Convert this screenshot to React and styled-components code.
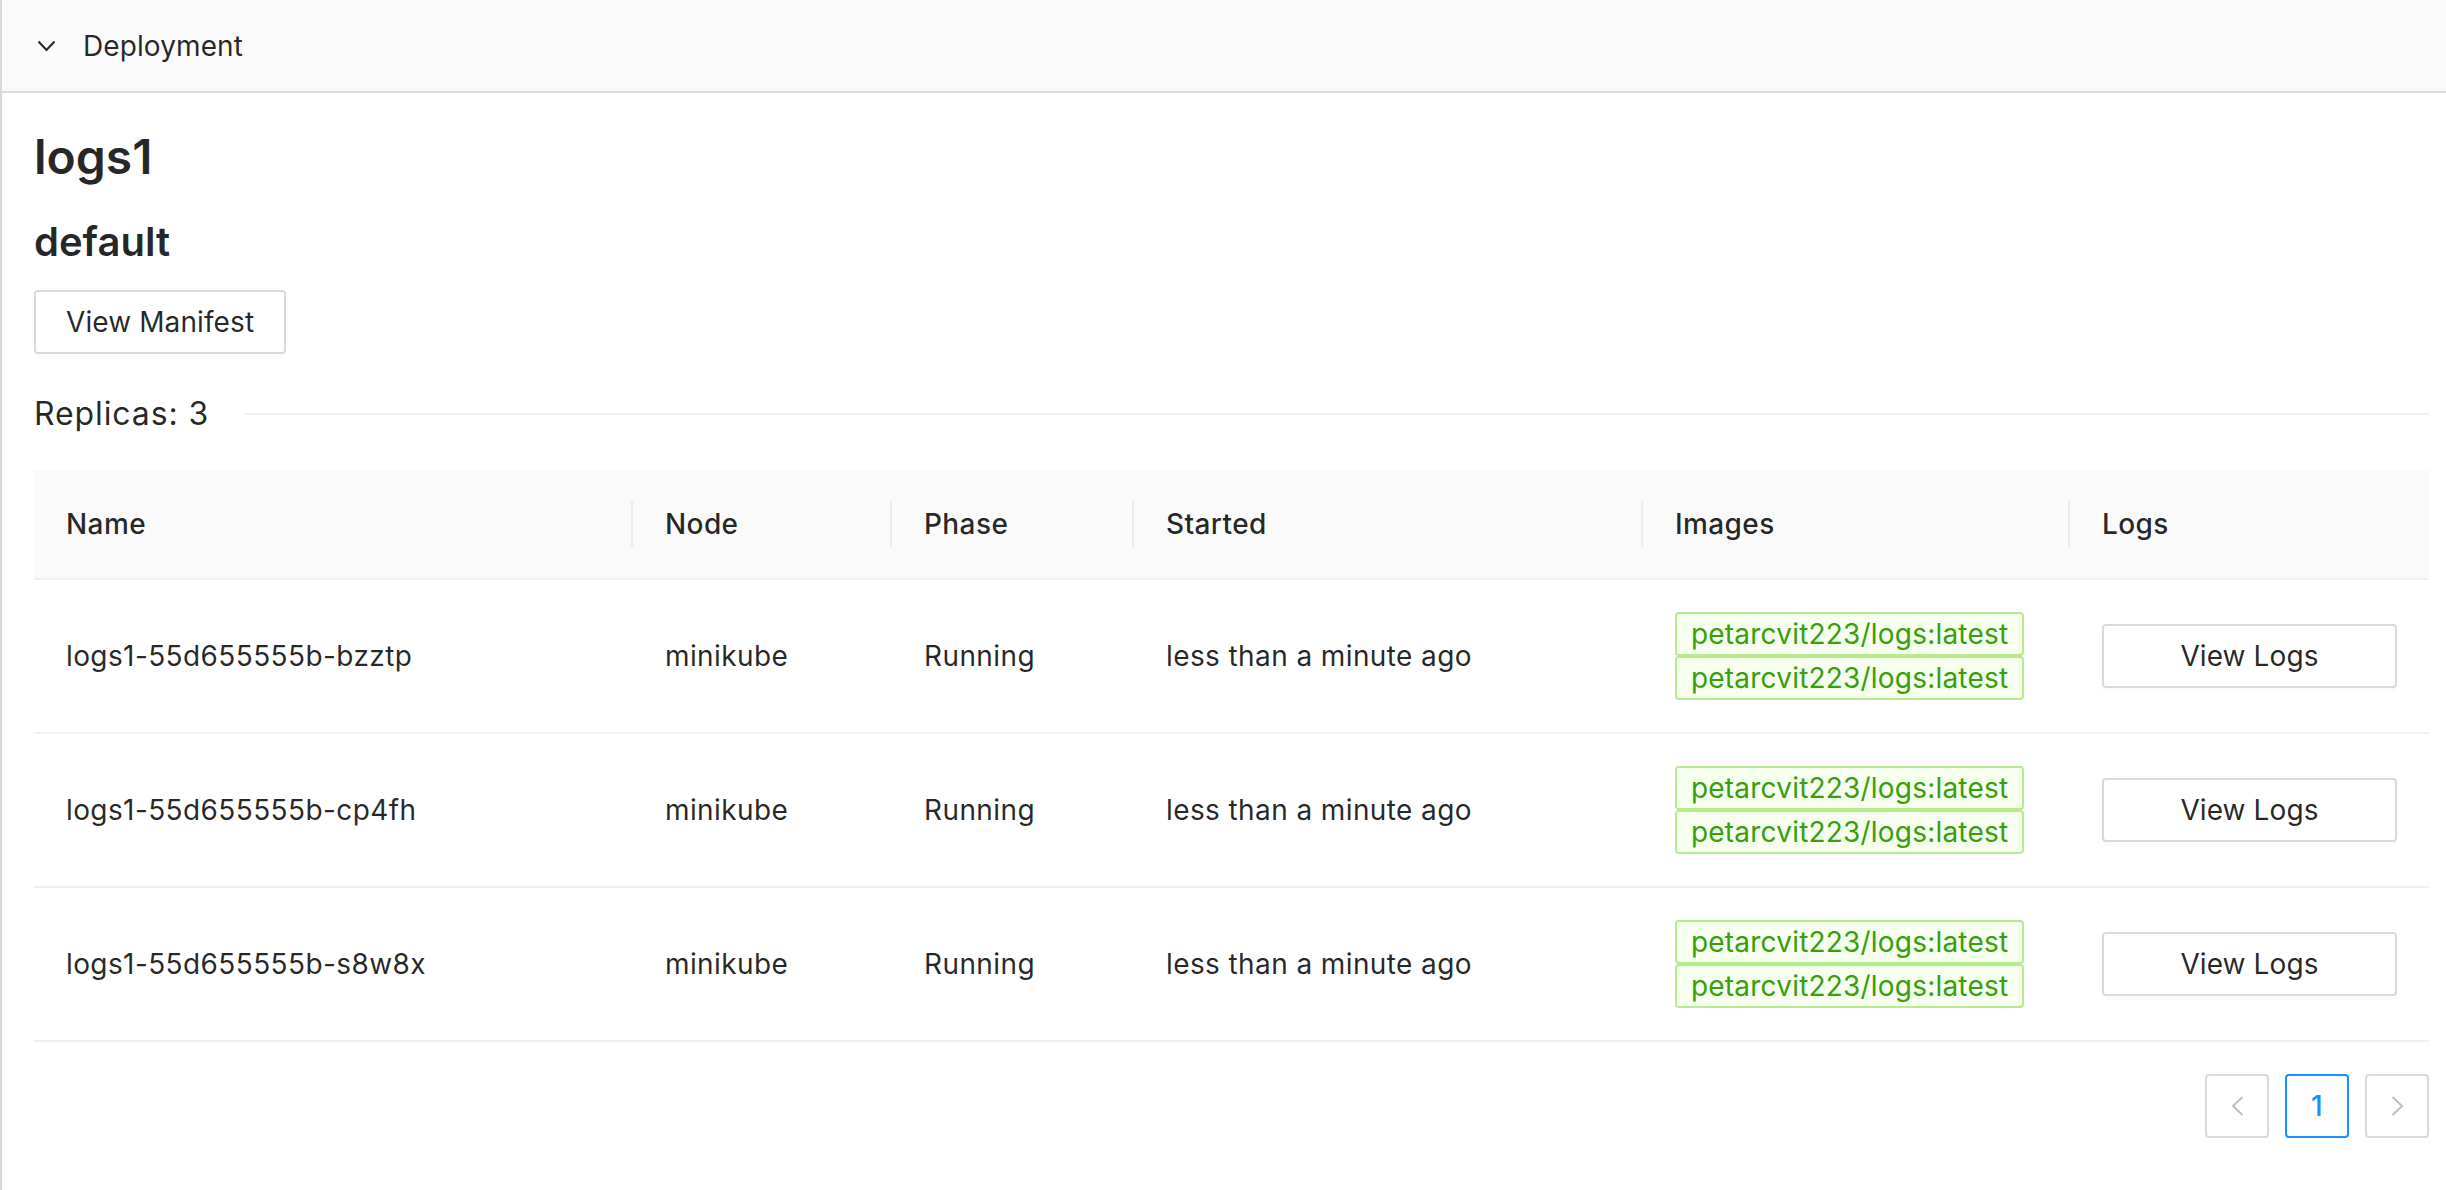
import React from "react";
import styled, {createGlobalStyle} from "styled-components";

const colors = {
    text: "rgba(0, 0, 0, 0.85)",
    border: "#d9d9d9",
    split: "#f0f0f0",
    headerBg: "#fafafa",
    primary: "#1890ff",
    disabled: "#bfbfbf",
}

const GlobalStyle = createGlobalStyle`
  html, body {
    margin: 0;
    background: #fff;
  }

  body {
    font-family: Inter, "Noto Sans", "Liberation Sans", sans-serif;
    color: ${colors.text};
    letter-spacing: 0.4px;
  }
`

const Panel = styled.div`
  border-left: 2px solid ${colors.border};
  min-height: 1190px;
  box-sizing: border-box;
`

const PanelHeader = styled.div`
  display: flex;
  align-items: center;
  height: 91px;
  padding-left: 35px;
  background: ${colors.headerBg};
  border-bottom: 2px solid ${colors.border};
  font-size: 28px;
  line-height: 44px;
  letter-spacing: 0.1px;
`

const HeaderTitle = styled.span`
  margin-left: 27px;
`

const Content = styled.div`
  padding: 32px 17px 32px 32px;
`

const Title = styled.h3`
  margin: 0 0 24px;
  font-size: 48px;
  line-height: 1.35;
  font-weight: 600;
  letter-spacing: 0;
`

const SubTitle = styled.h4`
  margin: 0 0 20px;
  font-size: 40px;
  line-height: 1.4;
  font-weight: 600;
  letter-spacing: 0;
`

const Button = styled.button`
  display: ${props => props.block ? "block" : "inline-block"};
  width: ${props => props.block ? "100%" : "auto"};
  height: 64px;
  padding: 0 30px;
  font-family: inherit;
  font-size: 28px;
  letter-spacing: 0.1px;
  color: ${colors.text};
  background: #fff;
  border: 2px solid ${colors.border};
  border-radius: 4px;
  box-shadow: 0 4px 0 rgba(0, 0, 0, 0.015);
  cursor: pointer;
`

const Divider = styled.div`
  display: flex;
  align-items: center;
  margin: 35px 0 31px;
  font-size: 32px;
  line-height: 50px;
  letter-spacing: 0.9px;

  &:after {
    content: "";
    flex: 1;
    margin-left: 35px;
    border-top: 2px solid ${colors.split};
  }
`

const Table = styled.table`
  width: 100%;
  table-layout: fixed;
  border-collapse: collapse;
  font-size: 28px;
  line-height: 44px;
`

const Th = styled.th`
  position: relative;
  padding: 32px;
  text-align: left;
  font-weight: 500;
  background: ${colors.headerBg};
  border-bottom: 2px solid ${colors.split};

  &:not(:last-child):after {
    content: "";
    position: absolute;
    right: 0;
    top: 50%;
    width: 2px;
    height: 45px;
    transform: translateY(-50%);
    background: rgba(0, 0, 0, 0.06);
  }
`

const Td = styled.td`
  padding: 32px;
  vertical-align: middle;
  border-bottom: 2px solid ${colors.split};
`

const TagStack = styled.div`
  display: flex;
  flex-direction: column;
  align-items: flex-start;
`

const Tag = styled.span`
  display: inline-block;
  box-sizing: border-box;
  height: 44px;
  padding: 0 14px;
  font-size: 28px;
  line-height: 40px;
  letter-spacing: 0.2px;
  color: #389e0d;
  background: #f6ffed;
  border: 2px solid #b7eb8f;
  border-radius: 4px;
  white-space: nowrap;
`

const Pagination = styled.div`
  display: flex;
  justify-content: flex-end;
  gap: 16px;
  margin-top: 32px;
`

const PageItem = styled.div`
  display: flex;
  align-items: center;
  justify-content: center;
  box-sizing: border-box;
  width: 64px;
  height: 64px;
  font-size: 28px;
  font-weight: 500;
  color: ${props => props.active ? colors.primary : colors.disabled};
  border: 2px solid ${props => props.active ? colors.primary : colors.border};
  border-radius: 4px;
`

const ChevronDown = () => (
    <svg width="19" height="13" viewBox="0 0 19 13" fill="none">
        <polyline points="1.5,2.5 9.5,11 17.5,2.5" stroke="#262626" strokeWidth="2"/>
    </svg>
)

const Chevron = ({left}) => (
    <svg width="13" height="20" viewBox="0 0 13 20" fill="none">
        <polyline points={left ? "11.5,1 2,10 11.5,19" : "1.5,1 11,10 1.5,19"} stroke={colors.disabled} strokeWidth="2"/>
    </svg>
)

const pods = [
    "logs1-55d655555b-bzztp",
    "logs1-55d655555b-cp4fh",
    "logs1-55d655555b-s8w8x",
]

const columns = [
    {title: "Name", width: 599},
    {title: "Node", width: 259},
    {title: "Phase", width: 242},
    {title: "Started", width: 509},
    {title: "Images", width: 427},
    {title: "Logs", width: 359},
]

export default function App() {
    return (
        <>
            <GlobalStyle/>
            <Panel>
                <PanelHeader>
                    <ChevronDown/>
                    <HeaderTitle>Deployment</HeaderTitle>
                </PanelHeader>
                <Content>
                    <Title>logs1</Title>
                    <SubTitle>default</SubTitle>
                    <Button>View Manifest</Button>
                    <Divider>Replicas: 3</Divider>
                    <Table>
                        <colgroup>
                            {columns.map(c => <col key={c.title} style={{width: c.width}}/>)}
                        </colgroup>
                        <thead>
                        <tr>
                            {columns.map(c => <Th key={c.title}>{c.title}</Th>)}
                        </tr>
                        </thead>
                        <tbody>
                        {pods.map(name => (
                            <tr key={name}>
                                <Td>{name}</Td>
                                <Td>minikube</Td>
                                <Td>Running</Td>
                                <Td>less than a minute ago</Td>
                                <Td>
                                    <TagStack>
                                        <Tag>petarcvit223/logs:latest</Tag>
                                        <Tag>petarcvit223/logs:latest</Tag>
                                    </TagStack>
                                </Td>
                                <Td><Button block>View Logs</Button></Td>
                            </tr>
                        ))}
                        </tbody>
                    </Table>
                    <Pagination>
                        <PageItem><Chevron left/></PageItem>
                        <PageItem active>1</PageItem>
                        <PageItem><Chevron/></PageItem>
                    </Pagination>
                </Content>
            </Panel>
        </>
    )
}
